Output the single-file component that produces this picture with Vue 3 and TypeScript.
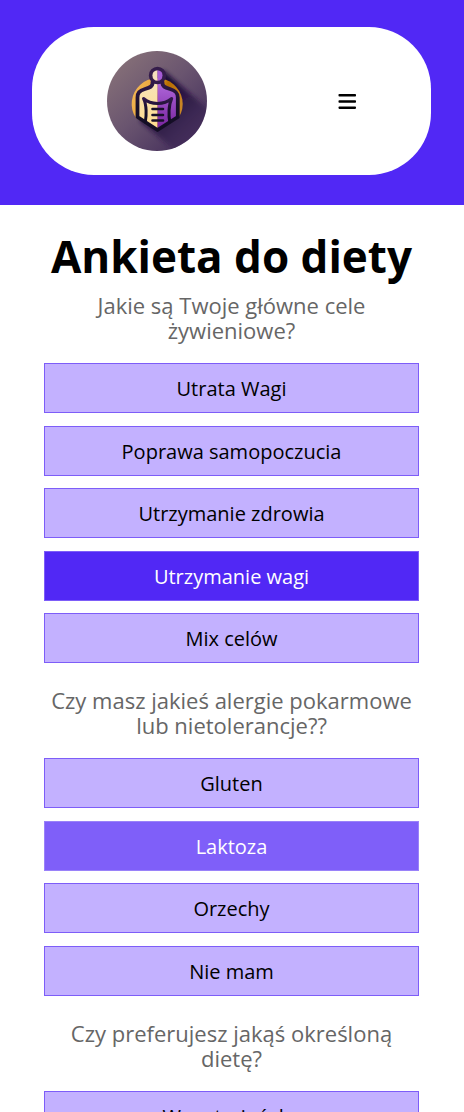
<script setup lang="ts">
import { reactive } from 'vue'

interface Question {
  id: string
  text: string
  options: string[]
}

const questions: Question[] = [
  {
    id: 'cele',
    text: 'Jakie są Twoje główne cele żywieniowe?',
    options: ['Utrata Wagi', 'Poprawa samopoczucia', 'Utrzymanie zdrowia', 'Utrzymanie wagi', 'Mix celów'],
  },
  {
    id: 'alergie',
    text: 'Czy masz jakieś alergie pokarmowe lub nietolerancje??',
    options: ['Gluten', 'Laktoza', 'Orzechy', 'Nie mam'],
  },
  {
    id: 'dieta',
    text: 'Czy preferujesz jakąś określoną dietę?',
    options: ['Wegetariańska'],
  },
]

const selected = reactive<Record<string, string>>({ cele: 'Utrzymanie wagi' })
const highlighted = reactive<Record<string, string>>({ alergie: 'Laktoza' })

function choose(id: string, option: string): void {
  selected[id] = option
  highlighted[id] = ''
}
</script>

<template>
  <header class="header">
    <nav class="nav">
      <a class="brand" href="#" aria-label="Strona główna">
        <svg class="logo" viewBox="0 0 100 100" aria-hidden="true">
          <defs>
            <linearGradient id="disc" x1="0.1" y1="0.1" x2="0.85" y2="0.9">
              <stop offset="0" stop-color="#867078" />
              <stop offset="0.5" stop-color="#69546f" />
              <stop offset="1" stop-color="#46305c" />
            </linearGradient>
            <linearGradient id="shade" gradientUnits="userSpaceOnUse" x1="52" y1="45" x2="90" y2="84">
              <stop offset="0" stop-color="#1c0b38" />
              <stop offset="0.5" stop-color="#2c1646" stop-opacity="0.8" />
              <stop offset="1" stop-color="#3c2254" stop-opacity="0.4" />
            </linearGradient>
            <linearGradient id="ring" x1="0" y1="0" x2="1" y2="0.4">
              <stop offset="0" stop-color="#f6bd5b" />
              <stop offset="0.45" stop-color="#e9a33a" />
              <stop offset="0.65" stop-color="#b86e00" />
              <stop offset="1" stop-color="#c98524" />
            </linearGradient>
            <linearGradient id="cream" x1="0" y1="0" x2="0" y2="1">
              <stop offset="0" stop-color="#f7e3b8" />
              <stop offset="1" stop-color="#ffdc8c" />
            </linearGradient>
            <linearGradient id="violet" x1="0" y1="0" x2="0" y2="1">
              <stop offset="0" stop-color="#b068dc" />
              <stop offset="1" stop-color="#76209c" />
            </linearGradient>
            <linearGradient id="ink" x1="0" y1="0" x2="0" y2="1">
              <stop offset="0" stop-color="#32194a" />
              <stop offset="0.5" stop-color="#18102a" />
              <stop offset="1" stop-color="#130d24" />
            </linearGradient>
            <clipPath id="round"><circle cx="50" cy="50" r="50" /></clipPath>
            <filter id="soft" x="-20%" y="-20%" width="140%" height="140%">
              <feGaussianBlur stdDeviation="2" />
            </filter>
          </defs>
          <circle cx="50" cy="50" r="50" fill="url(#disc)" />
          <g clip-path="url(#round)">
            <path d="M56 19 L110 66 V110 H80 L33 70 Z" fill="url(#shade)" filter="url(#soft)" />
          </g>
          <path d="M29 67 A25.5 25.5 0 1 1 72 66 L50 79 Z" fill="url(#ring)" />
          <path d="M50.5 31 H45 C46 36 42 37 37 38.5 C32 40 31 42 31 46 V66.5 L50.5 79 Z" fill="url(#cream)" />
          <path d="M50.5 31 H56 C55 36 59 37 64 38.5 C69 40 70.5 42 70.5 46 V66.5 L50.5 79 Z" fill="url(#violet)" />
          <path d="M50.5 17.5 A7 7 0 0 0 50.5 31 Z" fill="#f5dfbd" />
          <path d="M50.5 17.5 A7 7 0 0 1 50.5 31 Z" fill="#a55bd5" />
          <circle cx="50.5" cy="24.5" r="7" fill="none" stroke="#351c4b" stroke-width="3.4" />
          <g fill="none" stroke="url(#ink)" stroke-linejoin="round" stroke-linecap="round">
            <path d="M45.500 31 C46 35.500 43 36.500 38 38 C32 39.800 30.500 42 30.500 46.500 V66 L50.500 79 L70.800 66 V46.500 C70.800 42 69 39.800 63 38 C58 36.500 55 35.500 55.500 31" stroke-width="3.8" />
            <path d="M38.3 71 C39.5 65 39.8 54 36.5 47.500 C44 54 57 54 64.700 47.500 C61.500 54 61.500 65 62.800 71" stroke-width="3" />
          </g>
          <path d="M45.500 58 H56 M45.500 64 H56 M45.500 69.500 H56" fill="none" stroke="#19102a" stroke-width="2.600" stroke-linecap="round" />
        </svg>
      </a>
      <button class="menu" type="button" aria-label="Menu">
        <svg class="bars" viewBox="0 0 18 16" aria-hidden="true">
          <rect x="0.5" y="1" width="17.5" height="2.5" rx="0.8" />
          <rect x="0.5" y="7.2" width="17.5" height="2.5" rx="0.8" />
          <rect x="0.5" y="13.4" width="17.5" height="2.5" rx="0.8" />
        </svg>
      </button>
    </nav>
  </header>

  <main class="survey">
    <h1 class="title">Ankieta do diety</h1>
    <section v-for="q in questions" :key="q.id" class="question" :aria-labelledby="q.id">
      <h2 :id="q.id" class="prompt">{{ q.text }}</h2>
      <ul class="options">
        <li v-for="option in q.options" :key="option" class="item">
          <button
            type="button"
            class="option"
            :class="{ selected: selected[q.id] === option, highlighted: highlighted[q.id] === option }"
            :aria-pressed="selected[q.id] === option"
            @click="choose(q.id, option)"
          >
            {{ option }}
          </button>
        </li>
      </ul>
    </section>
  </main>
</template>

<style>
body {
  margin: 0;
  background: #fff;
}
</style>

<style scoped>
.header {
  padding: 27px 33px 30px 32px;
  background: #5128f5;
}

.nav {
  display: flex;
  align-items: center;
  justify-content: space-between;
  padding: 24px 75px;
  border-radius: 62px;
  background: #fff;
}

.brand,
.logo,
.bars {
  display: block;
}

.logo {
  width: 100px;
  height: 100px;
}

.menu {
  padding: 0;
  border: 0;
  background: none;
  color: #000;
  cursor: pointer;
}

.bars {
  width: 18px;
  height: 16px;
  fill: currentColor;
}

.survey {
  padding: 24px 45px 32px 44px;
  font-family: "Open Sans", "Noto Sans", sans-serif;
  text-align: center;
}

.title {
  margin: 0 0 9px;
  color: #000;
  font-size: 44px;
  font-weight: 700;
  line-height: 55px;
}

.question {
  margin-bottom: 25px;
}

.prompt {
  margin: 0 0 20px;
  color: #666;
  font-size: 22px;
  font-weight: 400;
  line-height: 25px;
}

.options {
  margin: 0;
  padding: 0;
  list-style: none;
}

.item:not(:last-child) {
  margin-bottom: 12px;
}

.item:nth-child(odd):not(:last-child) {
  margin-bottom: 13px;
}

.option {
  display: block;
  box-sizing: border-box;
  width: 100%;
  padding: 12px 12px 10px;
  border: 1px solid #7d5df8;
  border-radius: 0;
  background: #c3b1ff;
  color: #000;
  font-family: inherit;
  font-size: 20px;
  line-height: 26px;
  cursor: pointer;
}

.option.selected {
  background: #5128f5;
  color: #fff;
}

.option.highlighted {
  border-color: #9a82f9;
  background: #7f5ff9;
  color: #fff;
}
</style>
